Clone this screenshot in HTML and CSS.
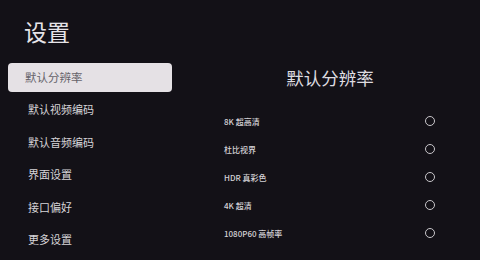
FILE: index.html
```html
<!DOCTYPE html>
<html lang="zh-CN">
<head>
<meta charset="utf-8">
<title>设置</title>
<link rel="stylesheet" href="styles.css">
</head>
<body>
<div class="page">
  <aside class="side">
    <h1 class="title">设置</h1>
    <ul class="menu">
      <li class="item selected">默认分辨率</li>
      <li class="item">默认视频编码</li>
      <li class="item">默认音频编码</li>
      <li class="item">界面设置</li>
      <li class="item">接口偏好</li>
      <li class="item">更多设置</li>
    </ul>
  </aside>
  <main class="panel">
    <h2 class="heading">默认分辨率</h2>
    <ul class="options">
      <li class="option"><span class="label">8K 超高清</span><span class="radio"></span></li>
      <li class="option"><span class="label">杜比视界</span><span class="radio"></span></li>
      <li class="option"><span class="label">HDR 真彩色</span><span class="radio"></span></li>
      <li class="option"><span class="label">4K 超清</span><span class="radio"></span></li>
      <li class="option"><span class="label">1080P60 高帧率</span><span class="radio"></span></li>
    </ul>
  </main>
</div>
</body>
</html>
```
FILE: styles.css
```css
html, body {
  margin: 0;
  padding: 0;
  background: #131117;
  width: 480px;
  height: 260px;
  overflow: hidden;
  font-family: "Noto Sans CJK SC", "Noto Sans", sans-serif;
}

.page {
  display: grid;
  grid-template-columns: 180px 1fr;
  height: 260px;
}

.side {
  padding-left: 8px;
}

.title {
  margin: 15px 0 16px 16px;
  height: 32px;
  line-height: 32px;
  font-size: 23px;
  font-weight: 400;
  color: #e6e4e8;
}

.menu {
  list-style: none;
  margin: 0;
  padding: 0;
  width: 164px;
  display: flex;
  flex-direction: column;
  gap: 3.4px;
}

.item {
  height: 29px;
  line-height: 29px;
  padding-left: 20px;
  font-size: 11px;
  color: #d6d4d8;
  border-radius: 4px;
}

.item.selected {
  background: #e5e1e5;
  color: #66636a;
  padding-left: 17px;
  font-size: 11.5px;
}

.panel {
  padding-top: 63px;
}

.heading {
  margin: 0;
  height: 29px;
  line-height: 29px;
  text-align: center;
  font-size: 17.5px;
  font-weight: 400;
  color: #dedce0;
}

.options {
  list-style: none;
  margin: 15px 0 0 0;
  padding: 0 45px 0 44px;
}

.option {
  height: 28px;
  display: flex;
  align-items: center;
  justify-content: space-between;
}

.label {
  font-size: 8px;
  font-weight: 500;
  color: #d4d2d6;
}

.radio {
  width: 8px;
  height: 8px;
  border: 1.5px solid #c9c7cb;
  border-radius: 50%;
}
```
